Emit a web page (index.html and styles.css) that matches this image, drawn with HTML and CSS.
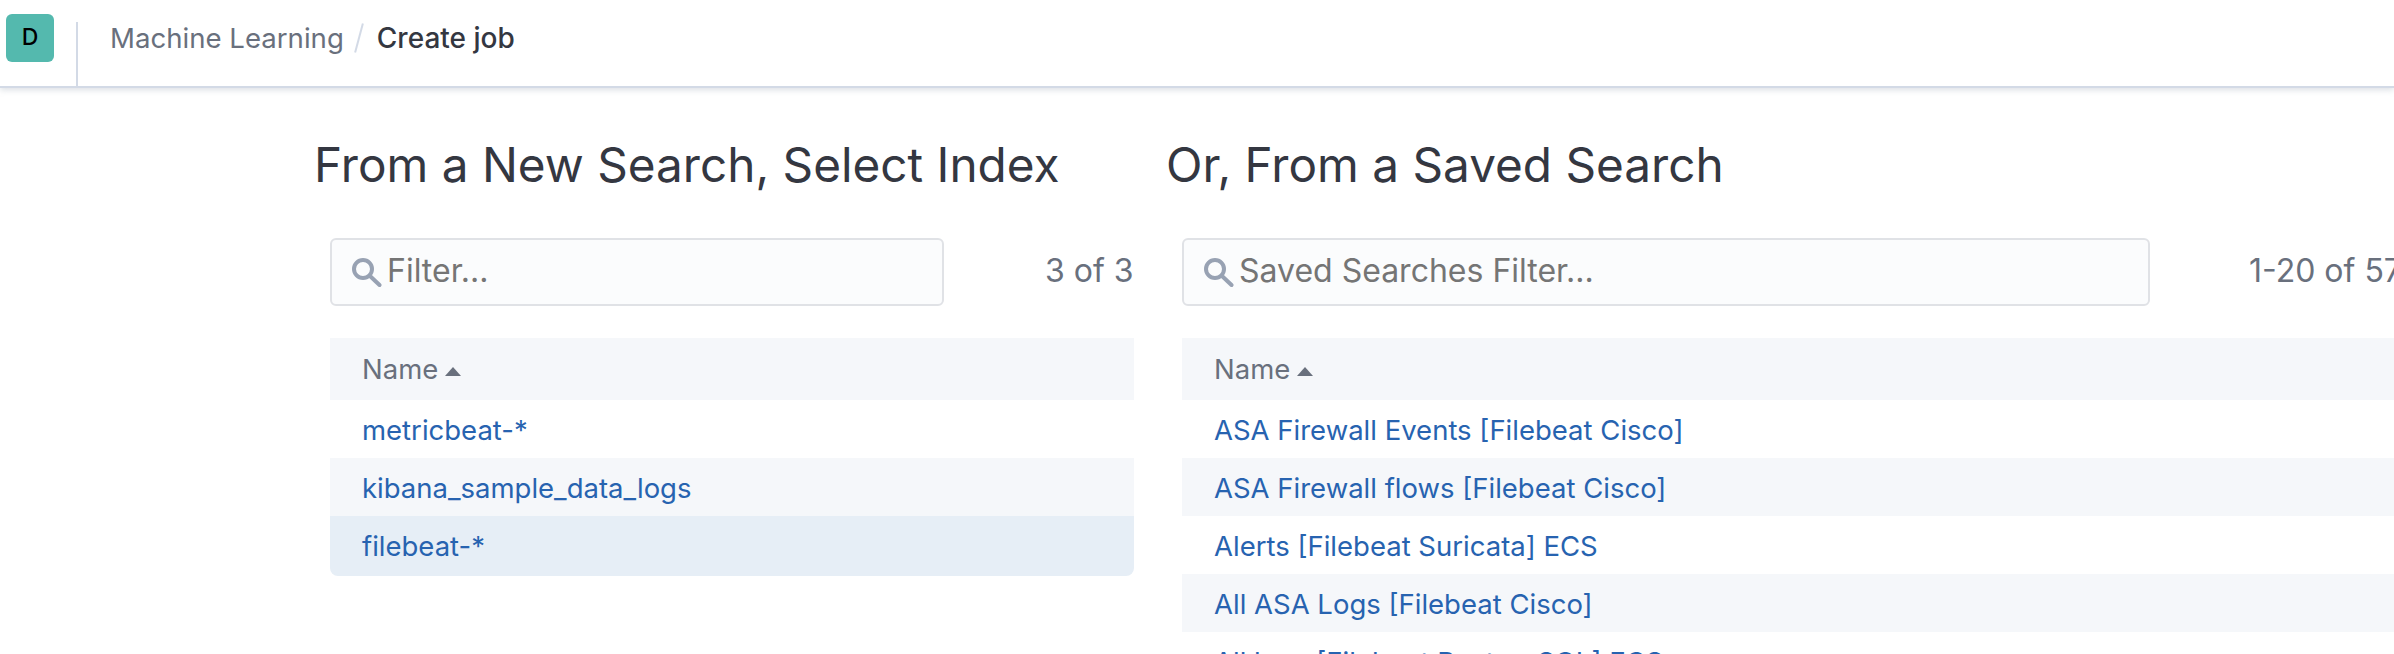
FILE: index.html
```html
<!DOCTYPE html>
<html lang="en">
<head>
    <meta charset="UTF-8">
    <title>Create job - Machine Learning</title>
    <link rel="stylesheet" href="styles.css">
</head>
<body>
    <header class="top-bar">
        <div class="space-slot">
            <div class="avatar">D</div>
        </div>
        <nav class="breadcrumbs">
            <span class="crumb">Machine Learning</span>
            <span class="crumb-sep"></span>
            <span class="crumb-current">Create job</span>
        </nav>
    </header>

    <main class="columns">
        <section class="panel panel-index">
            <h2>From a New Search, Select Index</h2>
            <div class="panel-body">
                <div class="tools">
                    <div class="search-box">
                        <svg class="search-icon" viewBox="0 0 30 30"><circle cx="11" cy="12" r="9"/><path d="M18 19 27.5 28"/></svg>
                        <span class="search-text">Filter...</span>
                    </div>
                    <div class="count">3 of 3</div>
                </div>
                <div class="table-head">Name<span class="sort-arrow"></span></div>
                <div class="row">metricbeat-*</div>
                <div class="row row-alt">kibana_sample_data_logs</div>
                <div class="row row-selected">filebeat-*</div>
            </div>
        </section>

        <section class="panel panel-saved">
            <h2>Or, From a Saved Search</h2>
            <div class="panel-body">
                <div class="tools">
                    <div class="search-box">
                        <svg class="search-icon" viewBox="0 0 30 30"><circle cx="11" cy="12" r="9"/><path d="M18 19 27.5 28"/></svg>
                        <span class="search-text">Saved Searches Filter...</span>
                    </div>
                    <div class="count">1-20 of 57</div>
                </div>
                <div class="table-head">Name<span class="sort-arrow"></span></div>
                <div class="row">ASA Firewall Events [Filebeat Cisco]</div>
                <div class="row row-alt">ASA Firewall flows [Filebeat Cisco]</div>
                <div class="row">Alerts [Filebeat Suricata] ECS</div>
                <div class="row row-alt">All ASA Logs [Filebeat Cisco]</div>
                <div class="row">All logs [Filebeat PostgreSQL] ECS</div>
            </div>
        </section>
    </main>
</body>
</html>
```

FILE: styles.css
```css
html, body {
    height: 100%;
    overflow: hidden;
}

body {
    margin: 0;
    background-color: #fff;
    font-family: Inter, "Liberation Sans", sans-serif;
    color: #343741;
}

.top-bar {
    display: flex;
    align-items: stretch;
    height: 86px;
    border-bottom: 2px solid #d3dae6;
    box-shadow: 0 2px 6px rgba(152, 162, 179, 0.35);
}

.space-slot {
    width: 78px;
    margin-top: 22px;
    padding-left: 6px;
    border-right: 2px solid #d3dae6;
    box-sizing: border-box;
}

.avatar {
    width: 48px;
    height: 48px;
    margin-top: -8px;
    background-color: #54b9ae;
    border-radius: 6px;
    color: #000;
    font-size: 23px;
    font-weight: 500;
    line-height: 46px;
    text-align: center;
}

.breadcrumbs {
    display: flex;
    align-items: flex-start;
    padding: 20px 0 0 32px;
    font-size: 27.6px;
    line-height: 36px;
}

.crumb {
    color: #69707d;
}

.crumb-sep {
    width: 2px;
    height: 30px;
    margin: 3px 17px 0 14px;
    background-color: #d3dae6;
    transform: rotate(15deg);
}

.crumb-current {
    font-size: 28px;
    font-weight: 500;
}

.columns {
    display: flex;
    padding: 49px 0 0 314px;
}

.panel h2 {
    margin: 0;
    font-size: 47.7px;
    font-weight: 400;
    line-height: 56px;
}

.panel-body {
    margin-top: 45px;
    padding-left: 16px;
}

.panel-index {
    flex: 0 0 852px;
}

.panel-saved {
    flex: 0 0 auto;
    width: 1400px;
}

.tools {
    display: flex;
    font-size: 32px;
    height: 68px;
    color: #69707d;
}

.search-box {
    display: flex;
    align-items: center;
    box-sizing: border-box;
    height: 68px;
    padding-left: 20px;
    background-color: #fbfcfd;
    border: 2px solid #e0e2e6;
    border-radius: 6px;
    color: #757575;
}

.search-text {
    padding-bottom: 3px;
}

.panel-index .search-box {
    width: 614px;
}

.panel-saved .search-box {
    width: 968px;
}

.search-icon {
    flex: none;
    width: 30px;
    height: 30px;
    margin-right: 5px;
    fill: none;
    stroke: #98a2b3;
    stroke-width: 4;
    stroke-linecap: round;
}

.count {
    line-height: 66px;
}

.panel-index .count {
    margin-left: 101px;
}

.panel-saved .count {
    margin-left: 99px;
    white-space: nowrap;
}

.table-head {
    margin-top: 32px;
    height: 62px;
    line-height: 62px;
    padding-left: 32px;
    background-color: #f5f7fa;
    color: #69707d;
    font-size: 27.5px;
}

.panel-index .table-head,
.panel-index .row {
    width: 772px;
}

.sort-arrow {
    display: inline-block;
    width: 0;
    height: 0;
    margin-left: 7px;
    vertical-align: 3px;
    border-left: 8px solid transparent;
    border-right: 8px solid transparent;
    border-bottom: 9px solid #69707d;
}

.row {
    height: 58px;
    line-height: 60px;
    padding-left: 32px;
    color: #2763b0;
    font-size: 27.5px;
}

.row-alt {
    background-color: #f5f7fa;
}

.row-selected {
    height: 60px;
    background-color: #e6eef6;
    border-radius: 0 0 8px 8px;
}
```
